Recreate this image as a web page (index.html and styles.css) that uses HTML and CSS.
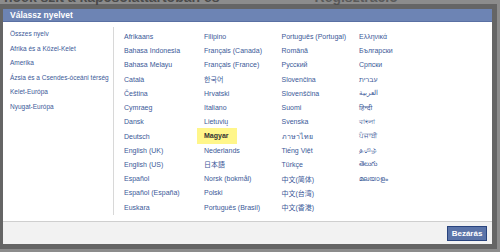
FILE: index.html
```html
<!DOCTYPE html>
<html lang="hu">

<head>
    <meta charset="UTF-8">
    <title>Válassz nyelvet</title>
    <link rel="stylesheet" href="styles.css">
</head>

<body>
    <div class="page">
        <div class="page-head">
            <span class="page-title">hoek szít a kapcsolattartóban és</span>
            <span class="page-reg">Regisztráció</span>
        </div>
    </div>

    <div class="dialog">
        <div class="dialog-title">Válassz nyelvet</div>

        <div class="dialog-body">
            <ul class="regions">
                <li><a href="#">Összes nyelv</a></li>
                <li><a href="#">Afrika és a Közel-Kelet</a></li>
                <li><a href="#">Amerika</a></li>
                <li><a href="#">Ázsia és a Csendes-óceáni térség</a></li>
                <li><a href="#">Kelet-Európa</a></li>
                <li><a href="#">Nyugat-Európa</a></li>
            </ul>

            <div class="langs">
                <a href="#">Afrikaans</a>
                <a href="#">Bahasa Indonesia</a>
                <a href="#">Bahasa Melayu</a>
                <a href="#">Català</a>
                <a href="#">Čeština</a>
                <a href="#">Cymraeg</a>
                <a href="#">Dansk</a>
                <a href="#">Deutsch</a>
                <a href="#">English (UK)</a>
                <a href="#">English (US)</a>
                <a href="#">Español</a>
                <a href="#">Español (España)</a>
                <a href="#">Euskara</a>

                <a href="#">Filipino</a>
                <a href="#">Français (Canada)</a>
                <a href="#">Français (France)</a>
                <a href="#" class="ko">한국어</a>
                <a href="#">Hrvatski</a>
                <a href="#">Italiano</a>
                <a href="#">Lietuvių</a>
                <a href="#" class="current">Magyar</a>
                <a href="#">Nederlands</a>
                <a href="#" class="ja">日本語</a>
                <a href="#">Norsk (bokmål)</a>
                <a href="#">Polski</a>
                <a href="#">Português (Brasil)</a>

                <a href="#">Português (Portugal)</a>
                <a href="#">Română</a>
                <a href="#">Русский</a>
                <a href="#">Slovenčina</a>
                <a href="#">Slovenščina</a>
                <a href="#">Suomi</a>
                <a href="#">Svenska</a>
                <a href="#">ภาษาไทย</a>
                <a href="#">Tiếng Việt</a>
                <a href="#">Türkçe</a>
                <a href="#" class="zh">中文(简体)</a>
                <a href="#" class="zh">中文(台湾)</a>
                <a href="#" class="zh">中文(香港)</a>

                <a href="#">Ελληνικά</a>
                <a href="#">Български</a>
                <a href="#">Српски</a>
                <a href="#">עברית</a>
                <a href="#">العربية</a>
                <a href="#">हिन्दी</a>
                <a href="#">বাংলা</a>
                <a href="#">ਪੰਜਾਬੀ</a>
                <a href="#">தமிழ்</a>
                <a href="#">తెలుగు</a>
                <a href="#">മലയാളം</a>
            </div>
        </div>

        <div class="dialog-foot">
            <button>Bezárás</button>
        </div>
    </div>
</body>

</html>
```

FILE: styles.css
```css
* {
    box-sizing: border-box;
}

body {
    margin: 0;
    height: 252px;
    overflow: hidden;
    background: #8c8c8c;
    font-family: "Liberation Sans", Arial, "Noto Sans", sans-serif;
}

.page-head {
    display: flex;
    margin-top: -11px;
    padding-left: 4px;
    font-size: 14px;
    font-weight: bold;
    color: #4a4a4a;
}

.page-reg {
    margin-left: 95px;
    color: #5a5a5a;
}

/* dialog lies over the page */
.dialog {
    position: absolute;
    left: -2px;
    top: 4px;
    width: 499px;
    height: 245px;
    border: 5px solid rgba(70, 70, 70, 0.55);
    background: #fff;
    background-clip: padding-box;
    display: flex;
    flex-direction: column;
}

.dialog-title {
    height: 13px;
    padding-left: 7px;
    background: #6d84b4;
    border-bottom: 1px solid #5a70a3;
    color: #fff;
    font-size: 8.5px;
    font-weight: bold;
    line-height: 12px;
}

.dialog-body {
    flex: 1;
    display: flex;
    padding: 5px 0 6px;
}

a {
    color: #3b5998;
    text-decoration: none;
}

.regions {
    width: 111px;
    margin: 0;
    padding: 0 0 0 7px;
    list-style: none;
    border-right: 1px solid #d8d8d8;
    font-size: 6.5px;
    line-height: 14.6px;
    white-space: nowrap;
}

.langs {
    display: grid;
    grid-template-columns: 80px 77.5px 77.5px 1fr;
    grid-template-rows: repeat(13, 14.23px);
    grid-auto-flow: column;
    align-items: center;
    padding: 2.4px 0 0 10px;
    font-size: 7px;
    white-space: nowrap;
    font-family: "Liberation Sans", Arial, "Noto Sans", "Noto Sans CJK SC", sans-serif;
}

.langs .ko {
    font-family: "Liberation Sans", "Noto Sans CJK KR", sans-serif;
}

.langs .ja {
    font-family: "Liberation Sans", "Noto Sans CJK JP", sans-serif;
}

.langs .zh {
    font-family: "Liberation Sans", "Noto Sans CJK SC", sans-serif;
}

.langs .current {
    justify-self: start;
    align-self: stretch;
    margin: -1px 0 -1px -7px;
    padding: 0 8px 0 7px;
    background: #fff68a;
    color: #333;
    font-weight: bold;
    line-height: 16px;
}

.dialog-foot {
    height: 23px;
    display: flex;
    justify-content: flex-end;
    align-items: flex-start;
    padding: 4px 5px 0 0;
    background: #f2f2f2;
    border-top: 1px solid #cfcfcf;
}

button {
    width: 40px;
    height: 15px;
    padding: 0;
    background: #5b74a8;
    border: 1px solid #29447e;
    color: #fff;
    font-family: "Liberation Sans", Arial, sans-serif;
    font-size: 8px;
    font-weight: bold;
}
```
